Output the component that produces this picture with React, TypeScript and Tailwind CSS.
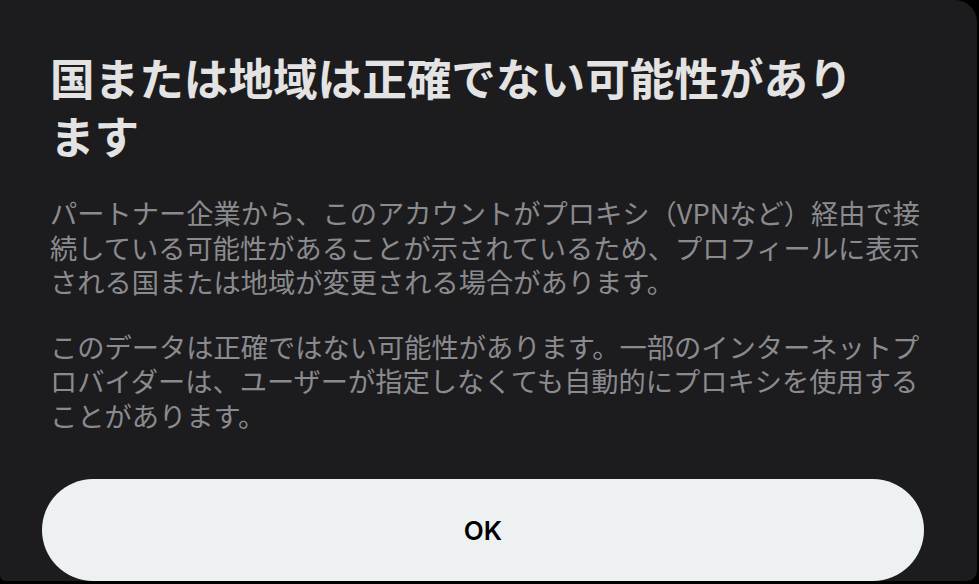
import React from 'react';

const jp = { fontFamily: '"Noto Sans CJK JP", "Noto Sans", sans-serif' };

export default function App() {
  return (
    <div className="w-[979px] h-[584px] bg-black overflow-hidden">
      {/* Sheet */}
      <div className="w-[977px] h-[581px] bg-[#1c1c1e] rounded-tr-[22px] rounded-br-[10px] rounded-bl-[6px] flex flex-col">
        <div className="pl-[50px] pt-[48px]" style={jp}>
          <h1 className="max-w-[835px] text-[44.6px] leading-[58px] font-bold text-[#e3e3e3]">
            国または地域は正確でない可能性があります
          </h1>
          <div className="mt-[31px] w-[880px] text-[27.25px] leading-[34.5px] text-[#8b8b8f] flex flex-col gap-[30px]">
            <p>
              パートナー企業から、このアカウントがプロキシ（VPNなど）経由で接続している可能性があることが示されているため、プロフィールに表示される国または地域が変更される場合があります。
            </p>
            <p>
              このデータは正確ではない可能性があります。一部のインターネットプロバイダーは、ユーザーが指定しなくても自動的にプロキシを使用することがあります。
            </p>
          </div>
        </div>

        <div className="mt-auto pl-[42px]">
          <button className="w-[882px] h-[102px] rounded-full bg-[#eef1f2] flex items-center justify-center">
            <span
              className="text-[26px] font-semibold text-black"
              style={{ fontFamily: 'Inter, "Noto Sans", sans-serif' }}
            >
              OK
            </span>
          </button>
        </div>
      </div>
    </div>
  );
}
